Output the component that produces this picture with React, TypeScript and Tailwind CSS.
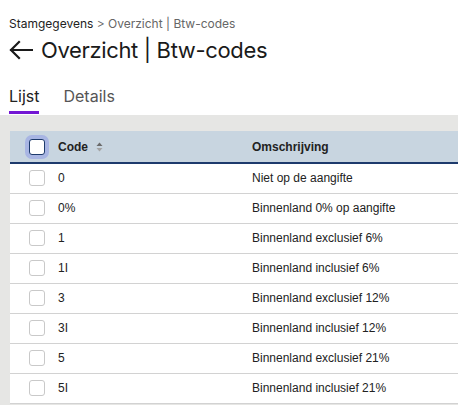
const rows = [
  { code: "0", desc: "Niet op de aangifte" },
  { code: "0%", desc: "Binnenland 0% op aangifte" },
  { code: "1", desc: "Binnenland exclusief 6%" },
  { code: "1I", desc: "Binnenland inclusief 6%" },
  { code: "3", desc: "Binnenland exclusief 12%" },
  { code: "3I", desc: "Binnenland inclusief 12%" },
  { code: "5", desc: "Binnenland exclusief 21%" },
  { code: "5I", desc: "Binnenland inclusief 21%" },
];

function SortIcon() {
  return (
    <svg width="7" height="10" viewBox="0 0 7 10" className="ml-[8px]">
      <path d="M3.5 0.5 L6.5 4 H0.5 Z" fill="#6b6b6b" />
      <path d="M3.5 9.5 L6.5 6 H0.5 Z" fill="#a3a3a3" />
    </svg>
  );
}

export default function App() {
  return (
    <div
      className="w-[458px] h-[405px] overflow-hidden bg-white flex flex-col"
      style={{ fontFamily: "Inter, 'Noto Sans', sans-serif" }}
    >
      <div className="px-[9px]">
        <div className="pt-[16px] text-[12px] leading-[16px] text-[#666]">
          <span className="text-[#222]">Stamgegevens</span> &gt; Overzicht | Btw-codes
        </div>

        <div className="mt-[4px] flex items-center h-[28px]">
          <svg width="24" height="20" viewBox="0 0 24 20" className="shrink-0">
            <path
              d="M23 10 H2 M10 2 L2 10 L10 18"
              fill="none"
              stroke="#1a1a1a"
              strokeWidth="2.2"
              strokeLinecap="square"
            />
          </svg>
          <h1 className="ml-[8px] text-[22px] leading-[28px] font-normal tracking-[-0.35px] text-[#1a1a1a]">
            Overzicht | Btw-codes
          </h1>
        </div>

        <div className="mt-[22px] flex gap-[24px] text-[16px] leading-[20px]">
          <button
            type="button"
            className="pb-[5px] border-b-[3px] border-[#7417d4] text-[#222]"
          >
            Lijst
          </button>
          <button
            type="button"
            className="pb-[5px] border-b-[3px] border-transparent text-[#555]"
          >
            Details
          </button>
        </div>
      </div>

      <div className="mt-[1px] flex-1 bg-[#e6e6e4] pl-[10px] pt-[16px]">
        <table
          className="w-[520px] bg-white border-collapse text-[12px] text-[#222] table-fixed"
          style={{ fontFamily: "'Liberation Sans', Arial, sans-serif" }}
        >
          <colgroup>
            <col className="w-[38px]" />
            <col className="w-[194px]" />
            <col />
          </colgroup>
          <thead>
            <tr className="h-[32px] bg-[#c8d5e0] border-b-2 border-[#1d3a6c]">
              <th className="pl-[19px] p-0 align-middle">
                <span className="block w-[16px] h-[16px] rounded-[3px] border-[1.5px] border-[#1d3a6c] bg-white ring-4 ring-[#a8b5e3]" />
              </th>
              <th className="pl-[10px] p-0 text-left font-bold align-middle">
                <span className="inline-flex items-center">
                  Code
                  <SortIcon />
                </span>
              </th>
              <th className="pl-[10px] p-0 text-left font-bold align-middle">
                Omschrijving
              </th>
            </tr>
          </thead>
          <tbody>
            {rows.map((row) => (
              <tr key={row.code} className="h-[30px] border-b border-[#d2d2d2]">
                <td className="pl-[19px] p-0 align-middle">
                  <span className="block w-[16px] h-[16px] rounded-[3px] border border-[#c9c9c9] bg-white" />
                </td>
                <td className="pl-[10px] p-0 align-middle">{row.code}</td>
                <td className="pl-[10px] p-0 align-middle">{row.desc}</td>
              </tr>
            ))}
          </tbody>
        </table>
      </div>
    </div>
  );
}
